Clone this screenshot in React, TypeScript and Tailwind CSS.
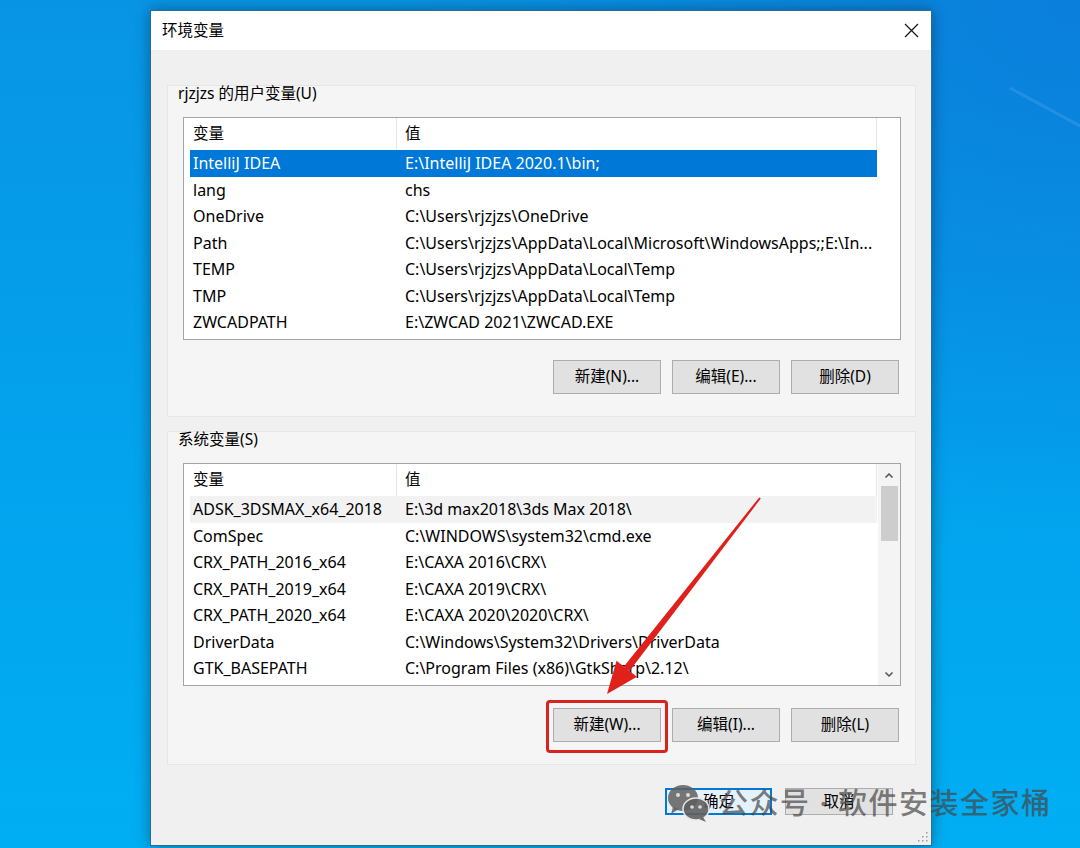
import React from "react";

const userVars: [string, string][] = [
  ["IntelliJ IDEA", "E:\\IntelliJ IDEA 2020.1\\bin;"],
  ["lang", "chs"],
  ["OneDrive", "C:\\Users\\rjzjzs\\OneDrive"],
  ["Path", "C:\\Users\\rjzjzs\\AppData\\Local\\Microsoft\\WindowsApps;;E:\\In..."],
  ["TEMP", "C:\\Users\\rjzjzs\\AppData\\Local\\Temp"],
  ["TMP", "C:\\Users\\rjzjzs\\AppData\\Local\\Temp"],
  ["ZWCADPATH", "E:\\ZWCAD 2021\\ZWCAD.EXE"],
];

const sysVars: [string, string][] = [
  ["ADSK_3DSMAX_x64_2018", "E:\\3d max2018\\3ds Max 2018\\"],
  ["ComSpec", "C:\\WINDOWS\\system32\\cmd.exe"],
  ["CRX_PATH_2016_x64", "E:\\CAXA 2016\\CRX\\"],
  ["CRX_PATH_2019_x64", "E:\\CAXA 2019\\CRX\\"],
  ["CRX_PATH_2020_x64", "E:\\CAXA 2020\\2020\\CRX\\"],
  ["DriverData", "C:\\Windows\\System32\\Drivers\\DriverData"],
  ["GTK_BASEPATH", "C:\\Program Files (x86)\\GtkSharp\\2.12\\"],
];

function Header() {
  return (
    <div className="flex h-[32px] items-center shrink-0">
      <div className="w-[207px] h-full flex items-center pl-[3px] border-r border-[#e5e5e5]">变量</div>
      <div className="w-[480px] h-full flex items-center pl-[8px] border-r border-[#e5e5e5]">值</div>
    </div>
  );
}

function Row({ name, value, state }: { name: string; value: string; state?: "sel" | "hover" }) {
  const cls =
    state === "sel"
      ? "bg-[#0078d7] text-white"
      : state === "hover"
      ? "bg-[#f2f2f2] text-black"
      : "text-black";
  return (
    <div className={`flex h-[26.5px] w-[687px] items-center shrink-0 text-[16px] ${cls}`}>
      <div className="w-[207px] pl-[3px] whitespace-nowrap overflow-hidden">{name}</div>
      <div className="w-[480px] pl-[8px] whitespace-nowrap overflow-hidden">{value}</div>
    </div>
  );
}

function Btn({ label, w = "w-[108px]" }: { label: string; w?: string }) {
  return (
    <div
      className={`${w} h-[34px] bg-[#e1e1e1] border border-[#adadad] flex items-center justify-center text-black`}
    >
      {label}
    </div>
  );
}

function Chevron({ up }: { up?: boolean }) {
  return (
    <svg width="10" height="7" viewBox="0 0 10 7">
      <path
        d={up ? "M1.5 5.5 L5 2 L8.5 5.5" : "M1.5 1.5 L5 5 L8.5 1.5"}
        fill="none"
        stroke="#505050"
        strokeWidth="1.5"
      />
    </svg>
  );
}

export default function App() {
  return (
    <div
      className="relative w-[1080px] h-[848px] overflow-hidden pl-[150px] pt-[10px] font-['Noto_Sans','Noto_Sans_CJK_SC',sans-serif] text-[15.5px] text-black bg-[radial-gradient(ellipse_at_100%_0%,#0a7fdb_0%,rgba(10,127,219,0)_45%),linear-gradient(180deg,#0894e5_0%,#03a3ee_55%,#00aef3_100%)]"
    >
      {/* dialog */}
      <div className="relative w-[782px] h-[836px] bg-[#f0f0f0] border border-[#2b6b96] shadow-[0_0_14px_rgba(0,0,0,0.35)] flex flex-col">
        {/* title bar */}
        <div className="h-[39px] bg-white flex items-center justify-between pl-[11px] pr-[12px] shrink-0">
          <span className="text-[15.5px]">环境变量</span>
          <svg width="15" height="15" viewBox="0 0 15 15">
            <path d="M1 1 L14 14 M14 1 L1 14" stroke="#1a1a1a" strokeWidth="1.3" />
          </svg>
        </div>

        {/* body */}
        <div className="flex-1 flex flex-col pl-[16px] pr-[15px]">
          {/* user vars panel */}
          <div className="mt-[35px] h-[332px] border border-[#e6e6e6] bg-[#f5f5f5] flex flex-col shrink-0">
            <div className="h-[18px] leading-[18px] pl-[10px] -mt-[2px]">rjzjzs 的用户变量(U)</div>
            <div className="mt-[15px] ml-[15px] w-[718px] h-[223px] bg-white border border-[#a4a4a4] pl-[6px] flex flex-col overflow-hidden">
              <Header />
              {userVars.map(([n, v], i) => (
                <Row key={n + i} name={n} value={v} state={i === 0 ? "sel" : undefined} />
              ))}
            </div>
            <div className="mt-[20px] flex justify-end gap-[11px] pr-[16px]">
              <Btn label="新建(N)..." />
              <Btn label="编辑(E)..." />
              <Btn label="删除(D)" />
            </div>
          </div>

          {/* system vars panel */}
          <div className="mt-[14px] h-[334px] border border-[#e6e6e6] bg-[#f5f5f5] flex flex-col shrink-0">
            <div className="h-[18px] leading-[18px] pl-[10px] -mt-[2px]">系统变量(S)</div>
            <div className="mt-[15px] ml-[15px] w-[718px] h-[223px] bg-white border border-[#a4a4a4] pl-[6px] flex overflow-hidden">
              <div className="flex flex-col w-[687px]">
                <Header />
                {sysVars.map(([n, v], i) => (
                  <Row key={n} name={n} value={v} state={i === 0 ? "hover" : undefined} />
                ))}
              </div>
              <div className="ml-auto w-[22px] h-full bg-[#f4f4f4] flex flex-col items-center">
                <div className="h-[22px] flex items-center justify-center">
                  <Chevron up />
                </div>
                <div className="w-[17px] h-[55px] bg-[#cdcdcd]" />
                <div className="flex-1" />
                <div className="h-[22px] flex items-center justify-center">
                  <Chevron />
                </div>
              </div>
            </div>
            <div className="mt-[22px] flex justify-end gap-[11px] pr-[16px]">
              <div className="relative">
                <Btn label="新建(W)..." />
                <div className="absolute -left-[7px] -right-[7px] -top-[8px] -bottom-[11px] border-[3px] border-[#d8231f] rounded-[4px]" />
              </div>
              <Btn label="编辑(I)..." />
              <Btn label="删除(L)" />
            </div>
          </div>

          {/* OK / Cancel */}
          <div className="mt-[23px] flex justify-end gap-[13px] pr-[23px]">
            <div className="w-[107px] h-[27px] bg-[#e5f1fb] border-2 border-[#0078d7] flex items-center justify-center">确定</div>
            <div className="w-[108px] h-[27px] bg-[#e1e1e1] border border-[#adadad] flex items-center justify-center">取消</div>
          </div>
        </div>

        {/* size grip */}
        <svg className="absolute right-[3px] bottom-[3px]" width="10" height="10" viewBox="0 0 10 10">
          <g fill="#9a9a9a">
            <rect x="8" y="0" width="1.5" height="1.5" />
            <rect x="8" y="4" width="1.5" height="1.5" />
            <rect x="4" y="4" width="1.5" height="1.5" />
            <rect x="8" y="8" width="1.5" height="1.5" />
            <rect x="4" y="8" width="1.5" height="1.5" />
            <rect x="0" y="8" width="1.5" height="1.5" />
          </g>
        </svg>
      </div>

      {/* decorative streak + red arrow */}
      <svg className="absolute inset-0 pointer-events-none" width="1080" height="848" viewBox="0 0 1080 848">
        <path d="M1010 88 L1080 126" stroke="rgba(255,255,255,0.1)" strokeWidth="3" />
        <polygon
          points="760.8,498.6 759.2,497.4 623.9,666.6 629.5,671"
          fill="#e0201b"
        />
        <polygon points="607,694 616.5,660.8 636.9,676.8" fill="#e0201b" />
      </svg>

      {/* watermark */}
      <div className="absolute left-[667px] top-[783px] flex items-center gap-[8px] pointer-events-none">
        <svg width="44" height="40" viewBox="0 0 44 40">
          <ellipse cx="16" cy="15" rx="15" ry="13" fill="rgba(95,95,95,0.85)" />
          <path d="M6 24 L4 31 L12 26 Z" fill="rgba(95,95,95,0.85)" />
          <circle cx="11" cy="12" r="2" fill="#dcdcdc" />
          <circle cx="21" cy="12" r="2" fill="#dcdcdc" />
          <ellipse cx="29" cy="26" rx="13" ry="11" fill="rgba(95,95,95,0.9)" stroke="#e8e8e8" strokeWidth="1.5" />
          <path d="M36 34 L39 39 L32 36 Z" fill="rgba(95,95,95,0.9)" />
          <circle cx="25" cy="24" r="1.8" fill="#dcdcdc" />
          <circle cx="33" cy="24" r="1.8" fill="#dcdcdc" />
        </svg>
        <span className="text-[29px] leading-[30px] font-medium text-[rgba(70,70,70,0.7)] whitespace-nowrap tracking-[1.5px]">
          公众号 · 软件安装全家桶
        </span>
      </div>
    </div>
  );
}
